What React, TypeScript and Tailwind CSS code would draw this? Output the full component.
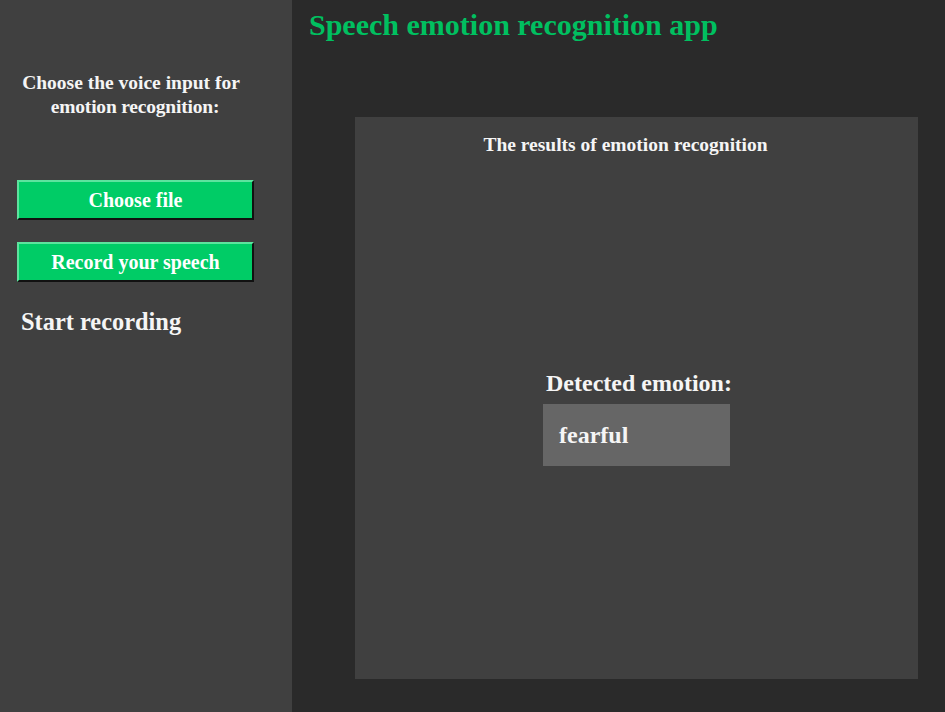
export default function App() {
  const serif = { fontFamily: '"Liberation Serif", "Times New Roman", serif' };
  return (
    <div className="flex w-[945px] h-[712px] bg-[#2a2a2a] overflow-hidden" style={serif}>
      <aside className="w-[292px] shrink-0 bg-[#404040] flex flex-col">
        <div className="mt-[71px] w-[262px] flex flex-col items-center text-[19.5px] leading-[24px] font-bold text-[#f5f5f5] whitespace-nowrap">
          <span>Choose the voice input for</span>
          <span className="pl-[8px] tracking-[-0.2px]">emotion recognition:</span>
        </div>
        <button className="mt-[61px] ml-[17px] w-[237px] h-[40px] bg-[#00cc66] text-white font-bold text-[20px] leading-none border-t-2 border-l-2 border-b-2 border-r-2 border-t-[#5de39e] border-l-[#5de39e] border-b-[#111] border-r-[#111]">
          Choose file
        </button>
        <button className="mt-[22px] ml-[17px] w-[237px] h-[40px] bg-[#00cc66] text-white font-bold text-[20px] leading-none border-t-2 border-l-2 border-b-2 border-r-2 border-t-[#5de39e] border-l-[#5de39e] border-b-[#111] border-r-[#111]">
          Record your speech
        </button>
        <p className="mt-[26px] ml-[21px] text-[24.4px] leading-[28px] font-bold text-[#f5f5f5]">Start recording</p>
      </aside>
      <main className="flex-1 flex flex-col">
        <h1 className="mt-[8px] ml-[17px] text-[30px] leading-[34px] font-bold text-[#00c060] whitespace-nowrap">
          Speech emotion recognition app
        </h1>
        <section className="mt-[75px] ml-[63px] w-[563px] h-[562px] bg-[#404040] flex flex-col items-center">
          <p className="mt-[17px] mr-[22px] text-[19.5px] leading-[22px] font-bold text-[#f5f5f5] whitespace-nowrap">
            The results of emotion recognition
          </p>
          <p className="mt-[214px] ml-[5px] text-[24px] leading-[26px] font-bold text-[#f5f5f5] whitespace-nowrap">Detected emotion:</p>
          <div className="mt-[8px] w-[187px] h-[62px] bg-[#666666] flex items-center pl-[16px]">
            <span className="text-[24px] font-bold text-[#f5f5f5]">fearful</span>
          </div>
        </section>
      </main>
    </div>
  );
}
